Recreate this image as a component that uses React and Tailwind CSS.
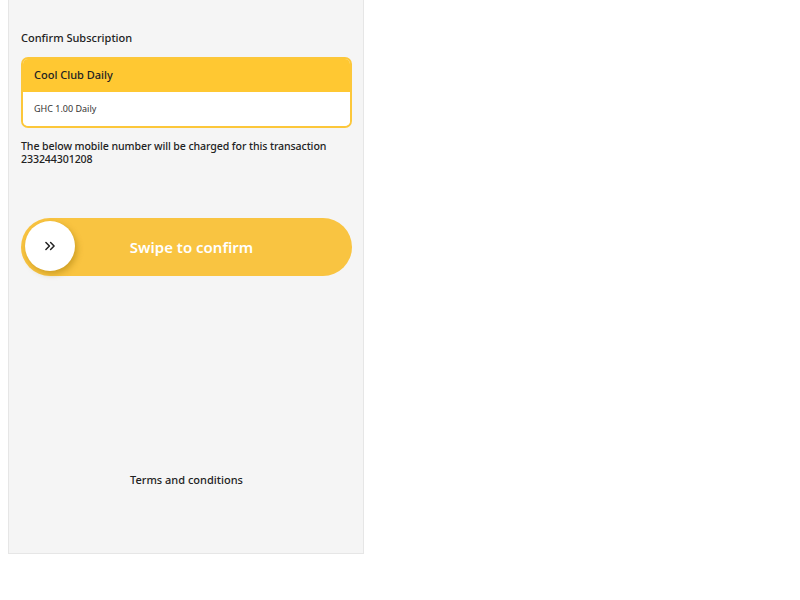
export default function App() {
  const font = { fontFamily: '"Noto Sans", "Open Sans", sans-serif' };
  return (
    <div className="w-[800px] h-[600px] bg-white" style={font}>
      <div className="ml-[8px] w-[356px] h-[554px] bg-[#f5f5f5] border-x border-b border-[#e6e6e6] flex flex-col pl-[12px] pr-[11px]">
        <div className="pt-[30px] text-[11px] font-medium text-[#222] leading-[16px]">Confirm Subscription</div>
        <div className="mt-[11px] rounded-[7px] border-2 border-[#fcc73a] overflow-hidden">
          <div className="h-[33px] bg-[#ffc832] flex items-center px-[11px] text-[11px] font-medium text-[#222]">Cool Club Daily</div>
          <div className="h-[34px] bg-white flex items-center px-[11px] text-[9px] text-[#333]">GHC 1.00 Daily</div>
        </div>
        <div className="mt-[12px] text-[10.6px] font-medium tracking-[-0.1px] text-[#222] leading-[13px]">
          <div>The below mobile number will be charged for this transaction</div>
          <div>233244301208</div>
        </div>
        <div className="mt-[52px] h-[58px] rounded-full bg-[#f9c441] relative flex items-center justify-center pl-[10px]">
          <div className="absolute left-[4px] top-[3px] w-[50px] h-[50px] rounded-full bg-white shadow-[2px_3px_6px_rgba(150,110,0,0.45)] flex items-center justify-center">
            <svg width="14" height="14" viewBox="0 0 24 24" fill="none" stroke="#222" strokeWidth="2.6" strokeLinecap="round" strokeLinejoin="round">
              <path d="M5 6l6 6-6 6" />
              <path d="M13 6l6 6-6 6" />
            </svg>
          </div>
          <span className="text-white text-[15px] font-semibold">Swipe to confirm</span>
        </div>
        <div className="mt-[196px] text-center text-[11px] font-medium text-[#222]">Terms and conditions</div>
      </div>
    </div>
  );
}
